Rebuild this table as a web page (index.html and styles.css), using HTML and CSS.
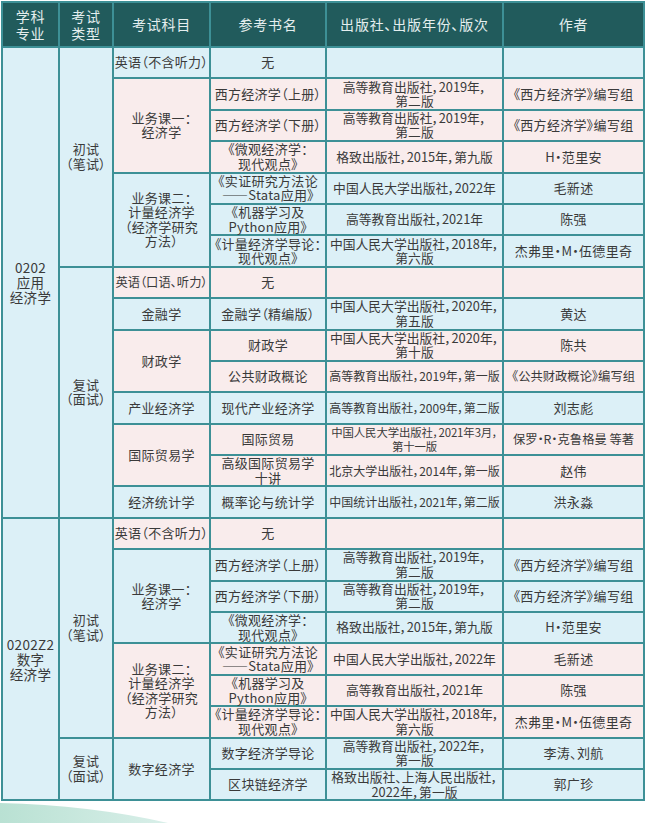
FILE: index.html
```html
<!DOCTYPE html>
<html lang="zh-CN">
<head>
<meta charset="utf-8">
<title>参考书目</title>
<link rel="stylesheet" href="styles.css">
</head>
<body>
<div class="page">
<table class="books">
<colgroup>
<col class="c1"><col class="c2"><col class="c3"><col class="c4"><col class="c5"><col class="c6">
</colgroup>
<thead>
<tr class="head">
<th>学科<br>专业</th><th>考试<br>类型</th><th>考试科目</th><th>参考书名</th><th>出版社、出版年份、版次</th><th>作者</th>
</tr>
</thead>
<tbody>
<tr>
<td class="b major" rowspan="15">0202<br>应用<br>经济学</td>
<td class="b" rowspan="7">初试<br>（笔试）</td>
<td class="b">英语（不含听力）</td><td class="b">无</td><td class="b pub"></td><td class="b"></td>
</tr>
<tr>
<td class="p" rowspan="3">业务课一：<br>经济学</td>
<td class="p">西方经济学（上册）</td><td class="p pub">高等教育出版社，2019年，<br>第二版</td><td class="p">《西方经济学》编写组</td>
</tr>
<tr>
<td class="p">西方经济学（下册）</td><td class="p pub">高等教育出版社，2019年，<br>第二版</td><td class="p">《西方经济学》编写组</td>
</tr>
<tr>
<td class="p">《微观经济学：<br>现代观点》</td><td class="p pub">格致出版社，2015年，第九版</td><td class="p">H·范里安</td>
</tr>
<tr>
<td class="b" rowspan="3">业务课二：<br>计量经济学<br>（经济学研究<br>方法）</td>
<td class="b">《实证研究方法论<br>——Stata应用》</td><td class="b pub">中国人民大学出版社，2022年</td><td class="b">毛新述</td>
</tr>
<tr>
<td class="b">《机器学习及<br>Python应用》</td><td class="b pub">高等教育出版社，2021年</td><td class="b">陈强</td>
</tr>
<tr>
<td class="b">《计量经济学导论：<br>现代观点》</td><td class="b pub">中国人民大学出版社，2018年，<br>第六版</td><td class="b">杰弗里·M·伍德里奇</td>
</tr>
<tr>
<td class="b" rowspan="8">复试<br>（面试）</td>
<td class="p sm">英语（口语、听力）</td><td class="p">无</td><td class="p pub"></td><td class="p"></td>
</tr>
<tr>
<td class="b">金融学</td><td class="b">金融学（精编版）</td><td class="b pub">中国人民大学出版社，2020年，<br>第五版</td><td class="b">黄达</td>
</tr>
<tr>
<td class="p" rowspan="2">财政学</td><td class="p">财政学</td><td class="p pub">中国人民大学出版社，2020年，<br>第十版</td><td class="p">陈共</td>
</tr>
<tr>
<td class="p">公共财政概论</td><td class="p pub s">高等教育出版社，2019年，第一版</td><td class="p sm">《公共财政概论》编写组</td>
</tr>
<tr>
<td class="b">产业经济学</td><td class="b">现代产业经济学</td><td class="b pub s">高等教育出版社，2009年，第二版</td><td class="b">刘志彪</td>
</tr>
<tr>
<td class="p" rowspan="2">国际贸易学</td><td class="p">国际贸易</td><td class="p pub xs">中国人民大学出版社，2021年3月，<br>第十一版</td><td class="p sm">保罗·R·克鲁格曼 等著</td>
</tr>
<tr>
<td class="p">高级国际贸易学<br>十讲</td><td class="p pub s">北京大学出版社，2014年，第一版</td><td class="p">赵伟</td>
</tr>
<tr>
<td class="b">经济统计学</td><td class="b">概率论与统计学</td><td class="b pub s">中国统计出版社，2021年，第二版</td><td class="b">洪永淼</td>
</tr>

<tr>
<td class="b major" rowspan="9">0202Z2<br>数字<br>经济学</td>
<td class="b" rowspan="7">初试<br>（笔试）</td>
<td class="p">英语（不含听力）</td><td class="p">无</td><td class="p pub"></td><td class="p"></td>
</tr>
<tr>
<td class="b" rowspan="3">业务课一：<br>经济学</td>
<td class="b">西方经济学（上册）</td><td class="b pub">高等教育出版社，2019年，<br>第二版</td><td class="b">《西方经济学》编写组</td>
</tr>
<tr>
<td class="b">西方经济学（下册）</td><td class="b pub">高等教育出版社，2019年，<br>第二版</td><td class="b">《西方经济学》编写组</td>
</tr>
<tr>
<td class="b">《微观经济学：<br>现代观点》</td><td class="b pub">格致出版社，2015年，第九版</td><td class="b">H·范里安</td>
</tr>
<tr>
<td class="p" rowspan="3">业务课二：<br>计量经济学<br>（经济学研究<br>方法）</td>
<td class="p">《实证研究方法论<br>——Stata应用》</td><td class="p pub">中国人民大学出版社，2022年</td><td class="p">毛新述</td>
</tr>
<tr>
<td class="p">《机器学习及<br>Python应用》</td><td class="p pub">高等教育出版社，2021年</td><td class="p">陈强</td>
</tr>
<tr>
<td class="p">《计量经济学导论：<br>现代观点》</td><td class="p pub">中国人民大学出版社，2018年，<br>第六版</td><td class="p">杰弗里·M·伍德里奇</td>
</tr>
<tr>
<td class="b" rowspan="2">复试<br>（面试）</td>
<td class="b" rowspan="2">数字经济学</td>
<td class="b">数字经济学导论</td><td class="b pub">高等教育出版社，2022年，<br>第一版</td><td class="b">李涛、刘航</td>
</tr>
<tr>
<td class="b">区块链经济学</td><td class="b pub">格致出版社、上海人民出版社，<br>2022年，第一版</td><td class="b">郭广珍</td>
</tr>
</tbody>
</table>
<svg class="swoosh" width="646" height="22" viewBox="0 0 646 22" aria-hidden="true">
<defs>
<linearGradient id="sw" x1="0" y1="0" x2="1" y2="0">
<stop offset="0" stop-color="#b9e1d3"/>
<stop offset="1" stop-color="#d9efe9"/>
</linearGradient>
</defs>
<path d="M0 2 Q90 4 168 22 L0 22 Z" fill="url(#sw)"/>
</svg>
</div>
</body>
</html>
```

FILE: styles.css
```css
html, body {
  margin: 0;
  padding: 0;
  background: #ffffff;
}

.page {
  width: 646px;
  padding: 1px 0 0 1px;
  box-sizing: border-box;
  font-family: "Noto Sans CJK SC", "Noto Sans", sans-serif;
}

.books {
  width: 642px;
  table-layout: fixed;
  border-collapse: collapse;
  color: #3a3a3a;
  font-size: 13px;
  line-height: 14.5px;
  font-feature-settings: "palt";
  letter-spacing: 0.3px;
}

.c1 { width: 57px; }
.c2 { width: 54px; }
.c3 { width: 97px; }
.c4 { width: 116px; }
.c5 { width: 177px; }
.c6 { width: 141px; }

.books th,
.books td {
  border: 2px solid #3d9096;
  padding: 0;
  text-align: center;
  vertical-align: middle;
  white-space: nowrap;
}

.head {
  height: 45px;
}

.head th {
  background: #215b5c;
  color: #e4eeee;
  font-weight: normal;
  font-size: 14px;
  line-height: 17px;
  letter-spacing: 0.8px;
}

.books tbody tr {
  height: 31.4px;
}

.b { background: #dcf0f7; }
.p { background: #f9ecec; }

.major {
  font-size: 13.5px;
  line-height: 15px;
}

.pub {
  font-size: 12.8px;
  letter-spacing: 0;
}

.pub.s {
  font-size: 12px;
}

.pub.xs {
  font-size: 11.4px;
  letter-spacing: -0.1px;
}

.sm {
  font-size: 12.3px;
  letter-spacing: 0;
}

.swoosh {
  display: block;
  margin-left: -1px;
}
```
